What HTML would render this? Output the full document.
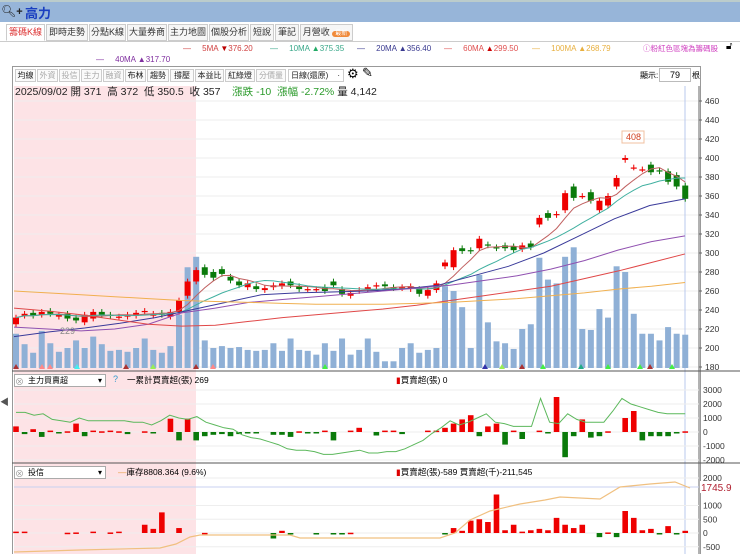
<!DOCTYPE html>
<html><head><meta charset="utf-8"><style>
*{margin:0;padding:0;box-sizing:border-box}
body{width:740px;height:554px;overflow:hidden;background:#fff;font-family:"Liberation Sans","Noto Sans CJK TC",sans-serif;font-size:11px;position:relative}
.abs{position:absolute;white-space:nowrap}
.tab{position:absolute;top:24px;height:17px;border:1px solid #ccc;background:#f6f6f6;font-size:9px;line-height:15px;text-align:center;color:#333;white-space:nowrap;overflow:hidden}
.tb{position:absolute;top:69px;height:13px;border:1px solid #ccc;background:#fafafa;font-size:8px;line-height:11px;text-align:center;color:#222;white-space:nowrap;overflow:hidden}
.tb.g{color:#aaa}
.lg{position:absolute;top:44px;font-size:8px;white-space:nowrap}
</style></head><body>
<div class="abs" style="left:0;top:0;width:740px;height:22px;background:#97b5d9;border-top:2px solid #bcc"></div>
<div class="abs" style="left:1px;top:4px;font-size:12px;color:#222">🔍︎<b style="font-size:11px">+</b></div>
<div class="abs" style="left:25px;top:3px;font-size:13px;font-weight:bold;color:#1a3fc0">高力</div>
<div class="tab" style="left:6px;width:39px;background:#fff;color:#d33;border-bottom-color:#fff">籌碼K線</div>
<div class="tab" style="left:46px;width:42px">即時走勢</div>
<div class="tab" style="left:89px;width:37px">分點K線</div>
<div class="tab" style="left:127px;width:40px">大量券商</div>
<div class="tab" style="left:168px;width:40px">主力地圖</div>
<div class="tab" style="left:209px;width:40px">個股分析</div>
<div class="tab" style="left:250px;width:24px">短說</div>
<div class="tab" style="left:275px;width:24px">筆記</div>
<div class="tab" style="left:300px;width:53px">月營收 <span style="background:#f08a3a;color:#fff;border-radius:6px;font-size:6px;padding:0 3px">最新</span></div>
<div class="abs" style="left:0;top:41px;width:740px;border-top:1px solid #ccc"></div>
<div class="lg" style="left:183px;color:#d04040">—&nbsp;&nbsp;&nbsp;&nbsp; 5MA <span style="color:#b00">▼</span>376.20</div>
<div class="lg" style="left:270px;color:#3aa88a">—&nbsp;&nbsp;&nbsp;&nbsp; 10MA <span style="color:#2a6">▲</span>375.35</div>
<div class="lg" style="left:357px;color:#3a3a90">—&nbsp;&nbsp;&nbsp;&nbsp; 20MA ▲356.40</div>
<div class="lg" style="left:444px;color:#e05050">—&nbsp;&nbsp;&nbsp;&nbsp; 60MA <span style="color:#c00">▲</span>299.50</div>
<div class="lg" style="left:532px;color:#e8b040">—&nbsp;&nbsp;&nbsp;&nbsp; 100MA ▲268.79</div>
<div class="lg" style="top:43px;left:643px;font-size:7.5px;color:#d040c0">ⓘ粉紅色區塊為籌碼股</div>
<div class="abs" style="top:41px;left:726px;font-size:10px">🔓︎</div>
<div class="lg" style="top:55px;left:96px;color:#8030a0">—&nbsp;&nbsp;&nbsp;&nbsp; 40MA ▲317.70</div>
<div class="abs" style="left:12px;top:66px;width:689px;height:488px;border:1px solid #999;border-bottom:none"></div>
<div class="tb" style="left:15px;width:21px">均線</div><div class="tb g" style="left:37px;width:21px">外資</div><div class="tb g" style="left:59px;width:21px">投信</div><div class="tb g" style="left:81px;width:21px">主力</div><div class="tb g" style="left:103px;width:21px">融資</div><div class="tb" style="left:125px;width:21px">布林</div><div class="tb" style="left:147px;width:22px">趨勢</div><div class="tb" style="left:170px;width:24px">撐壓</div><div class="tb" style="left:195px;width:29px">本益比</div><div class="tb" style="left:225px;width:30px">紅綠燈</div><div class="tb g" style="left:256px;width:30px">分價量</div>
<div class="tb" style="left:288px;width:56px;background:#fff;text-align:left;padding-left:2px">日線(還原)<span style="position:absolute;right:3px">·</span></div>
<div class="abs" style="left:347px;top:66px;font-size:13px">⚙</div>
<div class="abs" style="left:362px;top:65px;font-size:13px">✎</div>
<div class="abs" style="left:640px;top:70px;font-size:8px">顯示:</div>
<div class="abs" style="left:659px;top:68px;width:32px;height:14px;border:1px solid #bbb;font-size:9px;text-align:center;line-height:12px">79</div>
<div class="abs" style="left:692px;top:70px;font-size:8px">根</div>
<div class="abs" style="left:0;top:395px;font-size:9px;color:#555">◀</div>
<svg id="c" class="abs" style="left:0;top:0" width="740" height="554"></svg>
<div class="abs" style="left:15px;top:84px;font-size:10.5px;color:#222">2025/09/02 開 371 &nbsp;高 372 &nbsp;低 350.5 &nbsp;收 357 &nbsp;&nbsp;&nbsp;<span style="color:#2a9a2a">漲跌 -10 &nbsp;漲幅 -2.72%</span> 量 4,142</div>
<div class="abs" style="left:14px;top:374px;width:92px;height:13px;border:1px solid #aaa;background:#fff;font-size:8px;line-height:11px;padding-left:13px">主力買賣超<span style="position:absolute;right:3px">▾</span></div>
<div class="abs" style="left:15px;top:375px;font-size:9px;color:#999">⊗</div>
<div class="abs" style="left:113px;top:374px;font-size:9px;color:#39c">?</div>
<div class="abs" style="left:127px;top:374px;font-size:8.5px">一累計買賣超(張) 269</div>
<div class="abs" style="left:396px;top:374px;font-size:8.5px"><span style="color:#d00">▮</span>買賣超(張) 0</div>
<div class="abs" style="left:14px;top:466px;width:92px;height:13px;border:1px solid #aaa;background:#fff;font-size:8px;line-height:11px;padding-left:13px">投信<span style="position:absolute;right:3px">▾</span></div>
<div class="abs" style="left:15px;top:467px;font-size:9px;color:#999">⊗</div>
<div class="abs" style="left:118px;top:466px;font-size:8.5px"><span style="color:#e8a040">—</span>庫存8808.364 (9.6%)</div>
<div class="abs" style="left:396px;top:466px;font-size:8.5px"><span style="color:#d00">▮</span>買賣超(張)-589 買賣超(千)-211,545</div>
<script>
var s='',N=79,x0=16,dx=8.58;
function X(i){return x0+i*dx}
function Y(p){return 101+(460-p)*0.95}
s+='<rect x="14" y="86" width="182" height="468" fill="#fde3e6"/>';
for(var p=180;p<=460;p+=20){var y=Y(p);s+='<line x1="14" x2="699" y1="'+y+'" y2="'+y+'" stroke="#eee"/>';s+='<text x="705" y="'+(y+3)+'" font-size="8.5" fill="#333">'+p+'</text><line x1="699" x2="702" y1="'+y+'" y2="'+y+'" stroke="#666"/>';}
s+='<line x1="699" x2="699" y1="86" y2="554" stroke="#666"/>';
s+='<line x1="685" x2="685" y1="86" y2="554" stroke="#b8c8ee"/>';
var C=[232,236,234,238,236,235,231,229,235,238,235,234,233,235,237,239,236,235,238,250,270,282,277,274,278,271,266,268,262,263,266,268,266,262,262,262,260,266,257,258,261,264,266,265,263,264,265,257,261,268,290,303,302,302,315,308,305,305,303,308,306,337,337,341,363,358,360,355,355,360,379,400,390,388,385,386,375,370,357];
var O=[225,234,237,235,239,233,236,232,227,231,238,235,233,233,234,238,234,237,233,238,255,270,285,280,283,275,270,264,265,261,264,265,270,265,262,262,264,270,262,255,260,262,265,267,264,263,262,262,255,261,286,285,305,303,305,309,306,308,307,304,310,330,342,340,345,370,360,364,345,350,370,398,390,388,393,387,386,382,371];
var V=[215,204,195,218,205,196,200,208,200,212,204,197,198,196,200,210,198,195,202,235,285,296,208,200,202,200,201,198,197,198,205,197,210,198,197,193,205,197,210,193,198,210,196,186,186,200,205,195,198,200,265,260,243,200,277,227,207,205,199,220,225,295,272,268,296,306,220,219,241,232,286,280,236,215,215,208,222,215,214];
for(var i=0;i<N;i++){var x=X(i),yb=Y(V[i]);s+='<rect x="'+(x-3)+'" y="'+yb+'" width="6" height="'+(368-yb)+'" fill="#8fb0d6"/>';}
for(var i=0;i<N;i++){var x=X(i),o=O[i],c=C[i],up=c>=o,col=up?'#e00':'#0a7a0a';var hi=Math.max(o,c)+3,lo=Math.min(o,c)-3;
s+='<line x1="'+x+'" x2="'+x+'" y1="'+Y(hi)+'" y2="'+Y(lo)+'" stroke="'+col+'"/>';var t=Y(Math.max(o,c)),h=Math.max(1.2,Y(Math.min(o,c))-t);s+='<rect x="'+(x-3)+'" y="'+t+'" width="6" height="'+h+'" fill="'+col+'"/>';}
function ma(n,col){var pts=[];for(var i=0;i<N;i++){var a=0,k=0;for(var j=Math.max(0,i-n+1);j<=i;j++){a+=C[j];k++}pts.push(X(i)+','+Y(a/k))}s+='<polyline points="'+pts.join(' ')+'" fill="none" stroke="'+col+'" stroke-width="1"/>';}
ma(5,'#c06060');ma(10,'#40b0a0');
function pl(arr,col){var pts=[];for(var i=0;i<arr.length;i++){pts.push((14+i*(671/(arr.length-1)))+','+Y(arr[i]))}s+='<polyline points="'+pts.join(' ')+'" fill="none" stroke="'+col+'" stroke-width="1"/>';}
pl([212,217,221,226,232,240,248,256,258,259,260,262,266,276,286,300,318,336,350,357],'#3a3a9a');
pl([222,220,218,220,225,237,242,248,251,254,257,260,263,266,271,276,283,292,303,312,318],'#9050b0');
pl([242,239,235,230,225,223,224,228,232,235,238,241,245,250,255,260,265,273,281,290,299],'#e04848');
pl([260,258,256,254,252,250,249,248,247,246,246,246,247,248,250,252,255,258,262,265,269],'#f0b050');
s+='<rect x="622" y="131" width="22" height="12" fill="#fff" stroke="#f0c0a0"/><text x="626" y="140" font-size="9" fill="#d04020">408</text>';
s+='<text x="60" y="334" font-size="9" fill="#888">229</text>';
var cols=['#a33','#f88','#f88','#4ee','#9e5','#a33','#a33','#f88','#4e4','#33a','#9e5','#a33','#4e4','#2a8','#4e4','#4e4','#a33','#4e4'];
var xs=[16,42,50,77,153,126,196,213,325,485,502,522,543,581,608,640,650,672];
for(var i=0;i<xs.length;i++)s+='<polygon points="'+(xs[i]-3)+',369 '+(xs[i]+3)+',369 '+xs[i]+',364" fill="'+cols[i]+'"/>';
s+='<line x1="12" x2="740" y1="371" y2="371" stroke="#555"/><line x1="12" x2="740" y1="463" y2="463" stroke="#555"/>';
var z1=432,k1=0.014;[3000,2000,1000,0,-1000,-2000].forEach(function(v){var y=z1-v*k1;s+='<line x1="14" x2="699" y1="'+y+'" y2="'+y+'" stroke="#eee"/><text x="703" y="'+(y+3)+'" font-size="8.5" fill="#333">'+v+'</text>'});
var B1=[400,-150,200,-350,100,-100,50,600,-300,100,50,100,50,-150,0,50,-100,0,950,-600,950,-600,-300,-200,-150,-300,-150,-100,-100,0,-200,-200,-350,50,-100,-100,100,-600,0,100,300,0,-250,100,100,-150,0,0,100,100,300,600,900,1200,-300,400,600,-900,100,-500,0,100,-100,2500,-1800,-300,900,-400,-300,50,0,1000,1500,-600,-300,-300,-300,-100,50];
var CU=[1400,1400,1200,1300,900,800,700,1000,800,800,800,800,800,700,700,500,800,1200,1000,900,1100,700,500,300,200,-200,-400,-500,-700,-900,-1200,-1300,-1300,-1400,-1600,-1600,-1500,-1400,-1300,-1500,-1500,-1400,-1400,-1200,-900,-600,-100,300,800,500,700,1000,1300,700,600,400,400,400,2400,700,600,1300,900,700,700,700,1500,2400,2000,1800,1600,1400,1300,1300,1300];
for(var i=0;i<N;i++){var v=B1[i];if(v==0)continue;var y=z1-Math.max(v,0)*k1,h=Math.max(1.5,Math.abs(v)*k1);s+='<rect x="'+(X(i)-2.8)+'" y="'+y+'" width="5.6" height="'+h+'" fill="'+(v>0?'#e00':'#0a7a0a')+'"/>';}
(function(){var p=[];for(var i=0;i<CU.length;i++){p.push(X(i*78/(CU.length-1))+','+(z1-CU[i]*k1))}s+='<polyline points="'+p.join(' ')+'" fill="none" stroke="#5cb85c" stroke-width="1"/>';})();
var z2=533,k2=0.0275;[2000,1000,500,0,-500].forEach(function(v){var y=z2-v*k2;s+='<line x1="14" x2="699" y1="'+y+'" y2="'+y+'" stroke="#eee"/><text x="703" y="'+(y+3)+'" font-size="8.5" fill="#333">'+v+'</text>'});
s+='<line x1="14" x2="699" y1="487" y2="487" stroke="#c8d0f0"/><rect x="700" y="481" width="40" height="12" fill="#fff"/><text x="701" y="491" font-size="10" fill="#b02030">1745.9</text>';
var B2=[0,50,50,50,0,0,0,0,10,20,0,50,0,20,50,0,0,300,150,750,0,180,0,0,5,0,0,0,0,0,0,0,-200,80,-20,0,0,-20,0,-20,-20,10,0,0,0,0,0,0,0,0,0,0,-20,180,80,450,500,400,1400,100,300,50,100,150,100,550,300,180,300,0,-150,20,-150,800,550,100,150,-30,250,-40,80,-589];
for(var i=0;i<N;i++){var v=B2[i+2];if(!v)continue;var y=z2-Math.max(v,0)*k2,h=Math.max(1.5,Math.abs(v)*k2);s+='<rect x="'+(X(i)-2.8)+'" y="'+y+'" width="5.6" height="'+h+'" fill="'+(v>0?'#e00':'#0a7a0a')+'"/>';}
s+='<polyline points="14,552 80,550 160,548 176,544 190,537 200,535 290,535 300,538 440,538 455,533 470,520 490,511 520,504 545,500 560,497 600,499 620,487 650,484 675,482 690,488" fill="none" stroke="#f0c080" stroke-width="1.2"/>';
document.getElementById('c').innerHTML=s;
</script>
</body></html>
